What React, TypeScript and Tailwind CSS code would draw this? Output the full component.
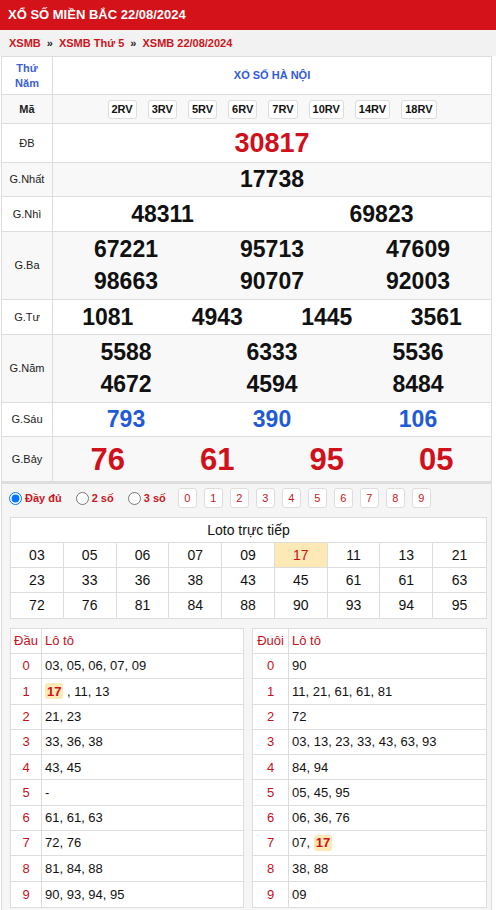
import React from "react";

const B = "border-[#ddd]";

function Row({
  label,
  h,
  bg,
  children,
  labelCls = "",
}: {
  label: React.ReactNode;
  h: string;
  bg: string;
  children: React.ReactNode;
  labelCls?: string;
}) {
  return (
    <div className={`flex border-b border-[#ddd] ${h} ${bg}`}>
      <div
        className={`w-[51px] shrink-0 border-r border-[#ddd] flex items-center justify-center text-[11px] text-[#222] ${labelCls}`}
      >
        {label}
      </div>
      <div className="flex-1 min-w-0">{children}</div>
    </div>
  );
}

const loto = [
  "03", "05", "06", "07", "09", "17", "11", "13", "21",
  "23", "33", "36", "38", "43", "45", "61", "61", "63",
  "72", "76", "81", "84", "88", "90", "93", "94", "95",
];

function Hl() {
  return (
    <span className="inline-flex items-center justify-center h-[16px] px-[2px] rounded-[3px] bg-[#fde9b6] text-[#d0101a] font-bold align-middle">
      17
    </span>
  );
}

const dau: React.ReactNode[] = [
  "03, 05, 06, 07, 09",
  <>
    <Hl />
    {" , 11, 13"}
  </>,
  "21, 23",
  "33, 36, 38",
  "43, 45",
  "-",
  "61, 61, 63",
  "72, 76",
  "81, 84, 88",
  "90, 93, 94, 95",
];

const duoi: React.ReactNode[] = [
  "90",
  "11, 21, 61, 61, 81",
  "72",
  "03, 13, 23, 33, 43, 63, 93",
  "84, 94",
  "05, 45, 95",
  "06, 36, 76",
  <>
    {"07, "}
    <Hl />
  </>,
  "38, 88",
  "09",
];

function HeadTail({
  title,
  firstW,
  rows,
}: {
  title: string;
  firstW: string;
  rows: React.ReactNode[];
}) {
  return (
    <div className="bg-white border border-[#ddd] text-[13px]">
      <div className="flex h-[25px] border-b border-[#ddd] text-[#c4111b]">
        <div className={`${firstW} shrink-0 border-r border-[#ddd] flex items-center justify-center`}>
          {title}
        </div>
        <div className="flex items-center pl-[3px]">Lô tô</div>
      </div>
      {rows.map((r, i) => (
        <div
          key={i}
          className={`flex h-[25.3px] ${i < 9 ? "border-b border-[#ddd]" : ""}`}
        >
          <div
            className={`${firstW} shrink-0 border-r border-[#ddd] flex items-center justify-center text-[#c4111b]`}
          >
            {i}
          </div>
          <div className="flex items-center pl-[3px] text-[#111] whitespace-pre">{r}</div>
        </div>
      ))}
    </div>
  );
}

export default function App() {
  const num = "font-bold text-[23px] leading-none text-[#111]";
  return (
    <div className="w-[496px] bg-white font-['Liberation_Sans',Arial,sans-serif] text-[#111]">
      <div className="h-[30px] bg-[#d31319] text-white font-bold text-[13px] flex items-center pl-[8px]">
        XỔ SỐ MIỀN BẮC 22/08/2024
      </div>
      <div className="h-[26px] bg-[#f2f2f2] flex items-center pl-[9px] text-[11px] font-bold text-[#c9161d]">
        <span>XSMB</span>
        <span className="mx-[6px] text-[#222]">»</span>
        <span>XSMB Thứ 5</span>
        <span className="mx-[6px] text-[#222]">»</span>
        <span>XSMB 22/08/2024</span>
      </div>

      <div className="ml-[1px] w-[491px] border-x border-t border-[#ddd]">
        <Row
          h="h-[38px]"
          bg="bg-white"
          label={
            <div className="text-center leading-[15px] font-bold text-[#3d5fd6]">
              Thứ
              <br />
              Năm
            </div>
          }
        >
          <div className="h-full flex items-center justify-center text-[11px] font-bold text-[#2f5ad8]">
            XỔ SỐ HÀ NỘI
          </div>
        </Row>
        <Row h="h-[29px]" bg="bg-[#f8f8f8]" label="Mã" labelCls="font-bold">
          <div className="h-full flex items-center justify-center gap-[11px]">
            {["2RV", "3RV", "5RV", "6RV", "7RV", "10RV", "14RV", "18RV"].map((c) => (
              <span
                key={c}
                className="h-[19px] px-[3px] flex items-center bg-white border border-[#ddd] rounded-[3px] text-[11px] font-bold text-[#111]"
              >
                {c}
              </span>
            ))}
          </div>
        </Row>
        <Row h="h-[39px]" bg="bg-white" label="ĐB">
          <div className="h-full flex items-center justify-center font-bold text-[27px] leading-none text-[#d0101a]">
            30817
          </div>
        </Row>
        <Row h="h-[34px]" bg="bg-[#f8f8f8]" label="G.Nhất">
          <div className={`h-full flex items-center justify-center ${num}`}>17738</div>
        </Row>
        <Row h="h-[35px]" bg="bg-white" label="G.Nhì">
          <div className="h-full grid grid-cols-2 items-center justify-items-center">
            <span className={num}>48311</span>
            <span className={num}>69823</span>
          </div>
        </Row>
        <Row h="h-[68px]" bg="bg-[#f8f8f8]" label="G.Ba">
          <div className="h-full grid grid-cols-3 grid-rows-2 items-center justify-items-center py-[1px]">
            {["67221", "95713", "47609", "98663", "90707", "92003"].map((n) => (
              <span key={n} className={num}>
                {n}
              </span>
            ))}
          </div>
        </Row>
        <Row h="h-[35px]" bg="bg-white" label="G.Tư">
          <div className="h-full grid grid-cols-4 items-center justify-items-center">
            {["1081", "4943", "1445", "3561"].map((n) => (
              <span key={n} className={num}>
                {n}
              </span>
            ))}
          </div>
        </Row>
        <Row h="h-[68px]" bg="bg-[#f8f8f8]" label="G.Năm">
          <div className="h-full grid grid-cols-3 grid-rows-2 items-center justify-items-center py-[1px]">
            {["5588", "6333", "5536", "4672", "4594", "8484"].map((n) => (
              <span key={n} className={num}>
                {n}
              </span>
            ))}
          </div>
        </Row>
        <Row h="h-[34px]" bg="bg-white" label="G.Sáu">
          <div className="h-full grid grid-cols-3 items-center justify-items-center">
            {["793", "390", "106"].map((n) => (
              <span key={n} className="font-bold text-[23px] leading-none text-[#1f5bd6]">
                {n}
              </span>
            ))}
          </div>
        </Row>
        <Row h="h-[45px]" bg="bg-[#f8f8f8]" label="G.Bảy">
          <div className="h-full grid grid-cols-4 items-center justify-items-center">
            {["76", "61", "95", "05"].map((n) => (
              <span key={n} className="font-bold text-[31px] leading-none text-[#d0101a]">
                {n}
              </span>
            ))}
          </div>
        </Row>

        <div className={`bg-[#f5f5f5] border-t-2 ${B} pb-[6px]`}>
          <div className="h-[28px] flex items-center pl-[7px] text-[11px] font-bold text-[#c9161d]">
            <label className="flex items-center gap-[3px]">
              <input type="radio" name="m" defaultChecked className="m-0 w-[13px] h-[13px]" />
              <span>Đầy đủ</span>
            </label>
            <label className="flex items-center gap-[3px] ml-[14px]">
              <input type="radio" name="m" className="m-0 w-[13px] h-[13px]" />
              <span>2 số</span>
            </label>
            <label className="flex items-center gap-[3px] ml-[14px]">
              <input type="radio" name="m" className="m-0 w-[13px] h-[13px]" />
              <span>3 số</span>
            </label>
            <div className="flex gap-[7px] ml-[12px]">
              {[0, 1, 2, 3, 4, 5, 6, 7, 8, 9].map((d) => (
                <span
                  key={d}
                  className="w-[19px] h-[20px] flex items-center justify-center bg-white border border-[#ddd] rounded-[3px] font-normal text-[11px] text-[#c9161d]"
                >
                  {d}
                </span>
              ))}
            </div>
          </div>

          <div className="mt-[5px] ml-[8px] mr-[4px] bg-white border border-[#ddd]">
            <div className="h-[25px] flex items-center justify-center text-[14px] border-b border-[#ddd]">
              Loto trực tiếp
            </div>
            <div className="grid grid-cols-9">
              {loto.map((n, i) => (
                <div
                  key={i}
                  className={`h-[25px] flex items-center justify-center text-[14px] border-[#ddd] ${
                    i % 9 !== 8 ? "border-r" : ""
                  } ${i < 18 ? "border-b" : ""} ${
                    i === 5 ? "bg-[#fde9b6] text-[#d0101a]" : "text-[#111]"
                  }`}
                >
                  {n}
                </div>
              ))}
            </div>
          </div>

          <div className="mt-[9px] ml-[8px] mr-[4px] grid grid-cols-[234px_235px] gap-[8px]">
            <HeadTail title="Đầu" firstW="w-[31px]" rows={dau} />
            <HeadTail title="Đuôi" firstW="w-[36px]" rows={duoi} />
          </div>
        </div>
      </div>
    </div>
  );
}
